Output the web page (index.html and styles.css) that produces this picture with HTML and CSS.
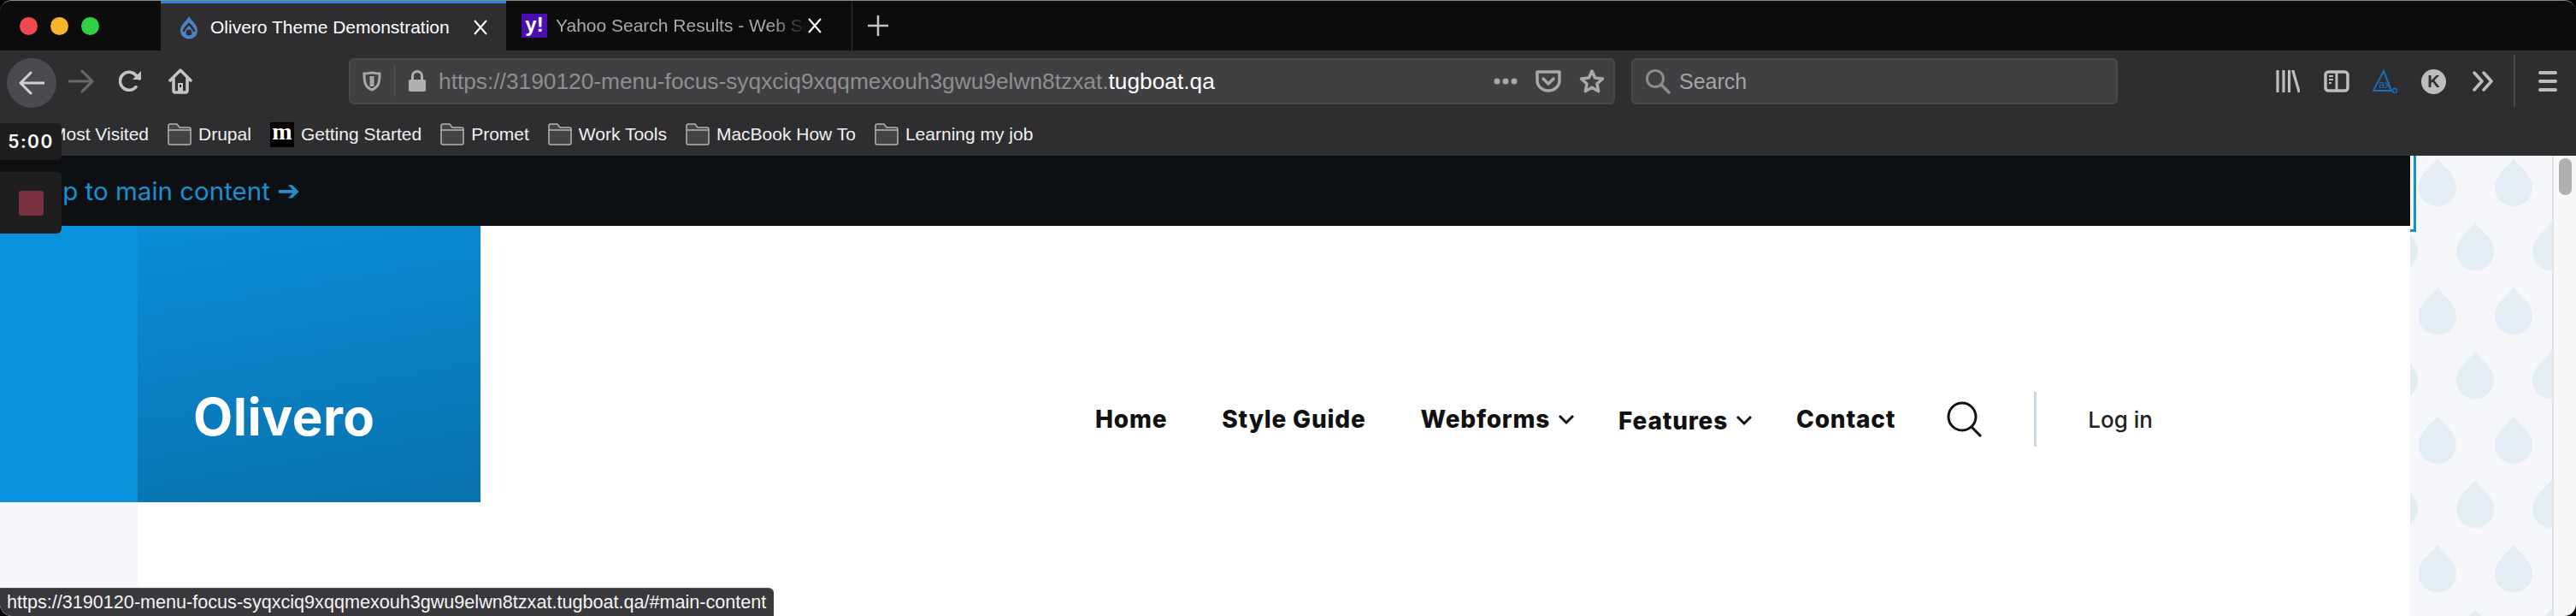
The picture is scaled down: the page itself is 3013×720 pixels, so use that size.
FILE: index.html
```html
<!doctype html>
<html lang="en">
    <head>
        <meta charset="utf-8" />
        <title>Olivero Theme Demonstration</title>
        <link rel="stylesheet" href="styles.css">
    </head>
    <body>
        <div class="window">
            <div class="tabbar">
                <div class="lights">
                    <span class="light light--red"></span>
                    <span class="light light--yellow"></span>
                    <span class="light light--green"></span>
                </div>
                <div class="tab tab--active">
                    <svg class="tab__favicon" width="24" height="28" viewBox="0 0 24 28">
                        <path d="M12 1C14 6 22 10 22 18a10 9.500 0 0 1-20 0C2 10 10 6 12 1Z" fill="#4f81c9"/>
                        <path d="M5.500 19C7 15 10 12 12 10c2 2 5 5 6.500 9" fill="none" stroke="#2e2e31" stroke-width="2.500"/>
                        <circle cx="12" cy="20" r="3.500" fill="#2e2e31"/>
                    </svg>
                    <span class="tab__title">Olivero Theme Demonstration</span>
                    <svg class="tab__close" width="16" height="18" viewBox="0 0 16 18"><path d="M1 1l14 16M15 1L1 17" stroke="#fff" stroke-width="2"/></svg>
                </div>
                <div class="tab">
                    <span class="tab__yahoo">y!</span>
                    <span class="tab__title tab__title--fade">Yahoo Search Results - Web Search</span>
                    <svg class="tab__close" width="16" height="18" viewBox="0 0 16 18"><path d="M1 1l14 16M15 1L1 17" stroke="#fff" stroke-width="2"/></svg>
                </div>
                <svg class="tabbar__new" width="26" height="26" viewBox="0 0 26 26"><path d="M13 1v24M1 13h24" stroke="#c4c4c4" stroke-width="2.500"/></svg>
            </div>

            <div class="toolbar">
                <div class="nav-btn nav-btn--back">
                    <svg width="30" height="28" viewBox="0 0 30 28"><path d="M29 14H3M14 2L2 14l12 12" fill="none" stroke="#d0d0d0" stroke-width="3" stroke-linecap="round" stroke-linejoin="round"/></svg>
                </div>
                <div class="nav-btn">
                    <svg width="30" height="28" viewBox="0 0 30 28"><path d="M1 14h26M16 2l12 12-12 12" fill="none" stroke="#6a6a6c" stroke-width="3" stroke-linecap="round" stroke-linejoin="round"/></svg>
                </div>
                <div class="nav-btn">
                    <svg width="28" height="26" viewBox="0 0 28 26"><path d="M20 19.500A10.500 10.500 0 1 1 20 6l4 4" fill="none" stroke="#c4c4c4" stroke-width="3.500" stroke-linecap="round"/><path d="M26 1v10H16" fill="#c4c4c4"/></svg>
                </div>
                <div class="nav-btn">
                    <svg width="28" height="30" viewBox="0 0 28 30"><path d="M2 14L14 2l12 12M6 11v15a2 2 0 0 0 2 2h12a2 2 0 0 0 2-2V11" fill="none" stroke="#c4c4c4" stroke-width="3.500" stroke-linejoin="round" stroke-linecap="round"/><rect x="11" y="17" width="6" height="10" fill="#c4c4c4"/><rect x="13" y="19" width="2" height="3" fill="#2e2e31"/></svg>
                </div>

                <div class="urlbar">
                    <svg class="urlbar__shield" width="22" height="24" viewBox="0 0 22 24"><path d="M2 3c6 0 6-1 9-1s3 1 9 1c0 10-1 16-9 19C3 19 2 13 2 3Z" fill="none" stroke="#a8a8a8" stroke-width="3"/><path d="M11 6v12" stroke="#a8a8a8" stroke-width="5"/></svg>
                    <span class="urlbar__divider"></span>
                    <svg class="urlbar__lock" width="22" height="26" viewBox="0 0 22 26"><path d="M5.500 12V7a5.500 5.500 0 0 1 11 0v5" fill="none" stroke="#b0b0b0" stroke-width="3"/><rect x="1" y="11" width="20" height="14" rx="2" fill="#b0b0b0"/></svg>
                    <span class="urlbar__text">https://3190120-menu-focus-syqxciq9xqqmexouh3gwu9elwn8tzxat.<b class="urlbar__host">tugboat.qa</b></span>
                    <svg class="urlbar__dots" width="28" height="8" viewBox="0 0 28 8"><circle cx="4" cy="4" r="3.500" fill="#a8a8a8"/><circle cx="14" cy="4" r="3.500" fill="#a8a8a8"/><circle cx="24" cy="4" r="3.500" fill="#a8a8a8"/></svg>
                    <svg class="urlbar__pocket" width="30" height="26" viewBox="0 0 30 26"><path d="M2 2h26v10a13 12 0 0 1-26 0Z" fill="none" stroke="#a8a8a8" stroke-width="3.500" stroke-linejoin="round"/><path d="M9 10l6 6 6-6" fill="none" stroke="#a8a8a8" stroke-width="3.500" stroke-linecap="round" stroke-linejoin="round"/></svg>
                    <svg class="urlbar__star" width="30" height="30" viewBox="0 0 30 30"><path d="M15 3l3.600 8 8.900 1-6.600 6 1.800 8.700L15 22.300 7.300 26.700 9.100 18l-6.600-6 8.900-1Z" fill="none" stroke="#a8a8a8" stroke-width="3.500" stroke-linejoin="round"/></svg>
                </div>

                <div class="searchbar">
                    <svg width="30" height="30" viewBox="0 0 30 30"><circle cx="12" cy="12" r="9.500" fill="none" stroke="#8c8c8e" stroke-width="3"/><path d="M19 19l9 9" stroke="#8c8c8e" stroke-width="3.500" stroke-linecap="round"/></svg>
                    <span class="searchbar__text">Search</span>
                </div>

                <div class="tool-btn">
                    <svg width="28" height="26" viewBox="0 0 28 26"><path d="M2 1v24M9 1v24M15.500 1v24M20 1l7 24" fill="none" stroke="#bdbdbd" stroke-width="3.200" stroke-linecap="round"/></svg>
                </div>
                <div class="tool-btn">
                    <svg width="30" height="26" viewBox="0 0 30 26"><rect x="2" y="2" width="26" height="22" rx="3.500" fill="none" stroke="#bdbdbd" stroke-width="3.500"/><path d="M15 2v22" stroke="#bdbdbd" stroke-width="3"/><path d="M6 7h5M6 11h5M6 15h3" stroke="#bdbdbd" stroke-width="2"/></svg>
                </div>
                <div class="tool-btn">
                    <svg width="30" height="28" viewBox="0 0 30 28"><path d="M13 2L1 25h21z" fill="none" stroke="#1b6db5" stroke-width="2"/><path d="M1 25h23" stroke="#1b6db5" stroke-width="2"/><circle cx="26" cy="25" r="2.500" fill="none" stroke="#1b6db5" stroke-width="1.500"/><text class="tool-btn__ax" x="7" y="22">ax</text></svg>
                </div>
                <div class="tool-btn"><span class="tool-btn__k">K</span></div>
                <div class="tool-btn">
                    <svg width="24" height="24" viewBox="0 0 24 24"><path d="M2 2l9 10-9 10M13 2l9 10-9 10" fill="none" stroke="#bdbdbd" stroke-width="3.500" stroke-linecap="round" stroke-linejoin="round"/></svg>
                </div>
                <span class="toolbar__divider"></span>
                <div class="toolbar__menu"><span></span><span></span><span></span></div>
            </div>

            <div class="bookmarks">
                <div class="bookmark">
                    <svg class="folder" width="28" height="26" viewBox="0 0 28 26"><path d="M1 23V3a2 2 0 0 1 2-2h8l3 4h11a2 2 0 0 1 2 2v16a2 2 0 0 1-2 2H3a2 2 0 0 1-2-2Z" fill="#444447" stroke="#b4b4b4" stroke-width="1.500"/><path d="M1 8h26" stroke="#b4b4b4" stroke-width="1.500"/></svg>
                    Most Visited
                </div>
                <div class="bookmark">
                    <svg class="folder" width="28" height="26" viewBox="0 0 28 26"><path d="M1 23V3a2 2 0 0 1 2-2h8l3 4h11a2 2 0 0 1 2 2v16a2 2 0 0 1-2 2H3a2 2 0 0 1-2-2Z" fill="#444447" stroke="#b4b4b4" stroke-width="1.500"/><path d="M1 8h26" stroke="#b4b4b4" stroke-width="1.500"/></svg>
                    Drupal
                </div>
                <div class="bookmark">
                    <span class="bookmark__m">m</span>
                    Getting Started
                </div>
                <div class="bookmark">
                    <svg class="folder" width="28" height="26" viewBox="0 0 28 26"><path d="M1 23V3a2 2 0 0 1 2-2h8l3 4h11a2 2 0 0 1 2 2v16a2 2 0 0 1-2 2H3a2 2 0 0 1-2-2Z" fill="#444447" stroke="#b4b4b4" stroke-width="1.500"/><path d="M1 8h26" stroke="#b4b4b4" stroke-width="1.500"/></svg>
                    Promet
                </div>
                <div class="bookmark">
                    <svg class="folder" width="28" height="26" viewBox="0 0 28 26"><path d="M1 23V3a2 2 0 0 1 2-2h8l3 4h11a2 2 0 0 1 2 2v16a2 2 0 0 1-2 2H3a2 2 0 0 1-2-2Z" fill="#444447" stroke="#b4b4b4" stroke-width="1.500"/><path d="M1 8h26" stroke="#b4b4b4" stroke-width="1.500"/></svg>
                    Work Tools
                </div>
                <div class="bookmark">
                    <svg class="folder" width="28" height="26" viewBox="0 0 28 26"><path d="M1 23V3a2 2 0 0 1 2-2h8l3 4h11a2 2 0 0 1 2 2v16a2 2 0 0 1-2 2H3a2 2 0 0 1-2-2Z" fill="#444447" stroke="#b4b4b4" stroke-width="1.500"/><path d="M1 8h26" stroke="#b4b4b4" stroke-width="1.500"/></svg>
                    MacBook How To
                </div>
                <div class="bookmark">
                    <svg class="folder" width="28" height="26" viewBox="0 0 28 26"><path d="M1 23V3a2 2 0 0 1 2-2h8l3 4h11a2 2 0 0 1 2 2v16a2 2 0 0 1-2 2H3a2 2 0 0 1-2-2Z" fill="#444447" stroke="#b4b4b4" stroke-width="1.500"/><path d="M1 8h26" stroke="#b4b4b4" stroke-width="1.500"/></svg>
                    Learning my job
                </div>
            </div>

            <div class="page">
                <div class="page__main">
                    <div class="skip-bar"><a class="skip-bar__link">Skip to main content <span class="skip-bar__arrow">➔</span></a></div>
                    <header class="site-header">
                        <div class="site-logo">
                            <div class="site-logo__stub"></div>
                            <div class="site-logo__name">Olivero</div>
                        </div>
                        <nav class="site-nav">
                            <span class="site-nav__item">Home</span>
                            <span class="site-nav__item">Style Guide</span>
                            <span class="site-nav__item site-nav__item--drop">Webforms
                                <svg width="20" height="13" viewBox="0 0 20 13"><path d="M2 2l8 8 8-8" fill="none" stroke="#111" stroke-width="3"/></svg>
                            </span>
                            <span class="site-nav__item site-nav__item--drop site-nav__item--low">Features
                                <svg width="20" height="13" viewBox="0 0 20 13"><path d="M2 2l8 8 8-8" fill="none" stroke="#111" stroke-width="3"/></svg>
                            </span>
                            <span class="site-nav__item site-nav__item--last">Contact</span>
                            <svg class="site-nav__search" width="42" height="42" viewBox="0 0 42 42"><circle cx="18" cy="18" r="16" fill="none" stroke="#111" stroke-width="3"/><path d="M29 30l11 11" stroke="#111" stroke-width="3"/></svg>
                            <span class="site-nav__divider"></span>
                            <span class="site-nav__login">Log in</span>
                        </nav>
                    </header>
                    <div class="page__below">
                        <div class="page__strip"></div>
                    </div>
                </div>
                <div class="page__side">
                    <svg class="page__drops" width="100%" height="100%">
                        <defs>
                            <path id="drop" d="M0 0C6 10 22 18 22 34C22 47 12 56 0 56C-12 56-22 47-22 34C-22 18-6 10 0 0Z" fill="#e4edf3"/>
                            <pattern id="drops" width="89" height="150.500" patternUnits="userSpaceOnUse">
                                <use href="#drop" x="32" y="3"/>
                                <use href="#drop" x="76" y="78"/>
                                <use href="#drop" x="-13" y="78"/>
                            </pattern>
                        </defs>
                        <rect width="100%" height="100%" fill="url(#drops)"/>
                    </svg>
                    <div class="page__focus"></div>
                </div>
                <div class="scrollbar"><div class="scrollbar__thumb"></div></div>
            </div>

            <div class="timer">
                <div class="timer__time">5:00</div>
                <div class="timer__stop"><span class="timer__square"></span></div>
            </div>
            <div class="status">https://3190120-menu-focus-syqxciq9xqqmexouh3gwu9elwn8tzxat.tugboat.qa/#main-content</div>
        </div>
    </body>
</html>
```

FILE: styles.css
```css
* {
    box-sizing: border-box;
}

html,
body {
    margin: 0;
    height: 720px;
    overflow: hidden;
    background: #000;
}

.window {
    position: relative;
    display: flex;
    flex-direction: column;
    height: 720px;
    overflow: hidden;
    border-top: 1px solid #8a8a8a;
    border-radius: 14px;
    background: #2e2e31;
    font-family: 'Liberation Sans', Arial, sans-serif;
}

/* tabs */
.tabbar {
    display: flex;
    align-items: stretch;
    height: 58px;
    background: #0c0c0c;
}

.lights {
    display: flex;
    align-items: center;
    gap: 15px;
    width: 188px;
    padding-left: 23px;
}

.light {
    width: 21px;
    height: 21px;
    border-radius: 50%;
}

.light--red {
    background: #f2484f;
}

.light--yellow {
    background: #f7b52c;
}

.light--green {
    background: #2fd044;
}

.tab {
    display: flex;
    align-items: center;
    width: 405px;
    padding-left: 18px;
    border-right: 1px solid #333;
    color: #aaa;
    font-size: 21px;
}

.tab--active {
    width: 404px;
    padding-left: 21px;
    border-top: 3px solid #2f86d8;
    border-right: 0;
    background: #2e2e31;
    color: #fff;
}

.tab__favicon {
    flex: none;
    margin-right: 13px;
}

.tab__title {
    flex: none;
    width: 308px;
    white-space: nowrap;
    overflow: hidden;
}

.tab__title--fade {
    width: 295px;
    -webkit-mask-image: linear-gradient(to right, #000 85%, transparent);
    mask-image: linear-gradient(to right, #000 85%, transparent);
}

.tab__close {
    flex: none;
}

.tab__yahoo {
    flex: none;
    width: 30px;
    height: 28px;
    margin-right: 10px;
    background: #4a0fb0;
    color: #fff;
    font-size: 24px;
    font-weight: bold;
    line-height: 26px;
    text-align: center;
}

.tabbar__new {
    align-self: center;
    margin-left: 17px;
}

/* toolbar */
.toolbar {
    display: flex;
    align-items: flex-start;
    height: 69px;
    padding: 9px 0 0 8px;
}

.nav-btn {
    display: flex;
    justify-content: center;
    align-items: center;
    width: 58px;
    height: 54px;
}

.nav-btn--back {
    width: 58px;
    height: 58px;
    border-radius: 50%;
    background: #4b4b4f;
}

.urlbar,
.searchbar {
    display: flex;
    align-items: center;
    height: 54px;
    border: 2px solid #4a4a4d;
    border-radius: 6px;
    background: #404043;
}

.urlbar {
    width: 1481px;
    margin-left: 168px;
    padding-left: 14px;
}

.urlbar__divider {
    width: 1px;
    height: 38px;
    margin: 0 15px;
    background: #555;
}

.urlbar__lock {
    flex: none;
}

.urlbar__text {
    margin-left: 14px;
    color: #8e8e90;
    font-size: 26.300px;
    white-space: nowrap;
}

.urlbar__host {
    color: #fff;
    font-weight: normal;
}

.urlbar__dots {
    margin-left: auto;
}

.urlbar__pocket {
    margin-left: 21px;
}

.urlbar__star {
    margin: 0 10px 0 21px;
}

.searchbar {
    width: 569px;
    margin-left: 19px;
    padding-left: 14px;
}

.searchbar__text {
    margin-left: 10px;
    color: #a4a4a6;
    font-size: 25px;
}

.tool-btn {
    display: flex;
    justify-content: center;
    align-items: center;
    width: 57px;
    height: 54px;
}

.searchbar + .tool-btn {
    margin-left: 170px;
}

.tool-btn__ax {
    fill: #1b6db5;
    font-family: 'Liberation Sans', Arial, sans-serif;
    font-size: 13px;
}

.tool-btn__k {
    width: 29px;
    height: 29px;
    border-radius: 50%;
    background: #bdbdbd;
    color: #2e2e31;
    font-size: 20px;
    font-weight: bold;
    line-height: 29px;
    text-align: center;
}

.toolbar__divider {
    width: 2px;
    height: 61px;
    margin: -4px 0 0 8px;
    background: #4a4a4d;
}

.toolbar__menu {
    display: flex;
    flex-direction: column;
    justify-content: center;
    gap: 6px;
    width: 22px;
    height: 54px;
    margin-left: 27px;
}

.toolbar__menu span {
    height: 4px;
    border-radius: 2px;
    background: #bdbdbd;
}

/* bookmarks */
.bookmarks {
    display: flex;
    align-items: center;
    gap: 22px;
    height: 54px;
    padding: 4px 0 0 24px;
    color: #f0f0f0;
    font-size: 21px;
}

.bookmark {
    display: flex;
    align-items: center;
    gap: 8px;
    white-space: nowrap;
}

.folder {
    flex: none;
}

.bookmark__m {
    width: 28px;
    height: 29px;
    background: #000;
    color: #fff;
    font-family: 'Liberation Serif', serif;
    font-size: 28px;
    font-weight: bold;
    line-height: 22px;
    text-align: center;
}

/* page */
.page {
    display: flex;
    flex: 1;
    min-height: 0;
}

.page__main {
    display: flex;
    flex-direction: column;
    width: 2819px;
    background: #fff;
}

.skip-bar {
    display: flex;
    align-items: center;
    height: 82px;
    padding-left: 31px;
    background: #0c1013;
}

.skip-bar__link {
    color: #1b8fd0;
    font-family: Inter, sans-serif;
    font-size: 29.500px;
}

.skip-bar__arrow {
    font-family: 'DejaVu Sans', sans-serif;
    font-size: 32px;
    font-weight: bold;
    line-height: 1;
}

.site-header {
    display: flex;
    height: 323px;
}

.site-logo {
    display: flex;
    width: 562px;
    background: #0a92dd;
}

.site-logo__stub {
    width: 161px;
}

.site-logo__name {
    flex: 1;
    padding: 193px 0 0 65px;
    background: linear-gradient(170deg, #0b8dd6, #0871ad);
    color: #fff;
    font-family: Inter, sans-serif;
    font-size: 60px;
    font-weight: 700;
    letter-spacing: 0.500px;
    line-height: 60px;
}

.site-nav {
    display: flex;
    align-items: center;
    align-self: flex-end;
    height: 64px;
    margin: 0 0 65px 719px;
    font-family: Inter, sans-serif;
    color: #111;
}

.site-nav__item {
    display: flex;
    align-items: center;
    gap: 9px;
    margin-right: 64px;
    font-size: 28px;
    font-weight: 800;
    letter-spacing: 0.800px;
    white-space: nowrap;
}

.site-nav__item--drop {
    margin-right: 51px;
}

.site-nav__item--low {
    padding-top: 3px;
}

.site-nav__item--last {
    margin-right: 60px;
}

.site-nav__search {
    flex: none;
    margin-right: 60px;
}

.site-nav__divider {
    width: 3px;
    height: 64px;
    margin-right: 60px;
    background: #c8d8e8;
}

.site-nav__login {
    color: #222;
    font-size: 26px;
    font-weight: 500;
}

.page__below {
    flex: 1;
}

.page__strip {
    width: 161px;
    height: 100%;
    background: #f5f7fa;
}

.page__side {
    position: relative;
    width: 168px;
    background: #f5f7fa;
    border-right: 2px solid #e0e2e4;
}

.page__drops {
    display: block;
}

.page__focus {
    position: absolute;
    top: 0;
    left: 0;
    width: 7px;
    height: 89px;
    border-right: 3px solid #148ed6;
    border-bottom: 3px solid #148ed6;
}

.scrollbar {
    flex: 1;
    padding: 3px 4px 0 6px;
    background: #f8f8f8;
}

.scrollbar__thumb {
    width: 15px;
    height: 43px;
    border-radius: 7px;
    background: #b0b0b0;
}

/* overlays */
.timer {
    position: absolute;
    top: 143px;
    left: 0;
    display: flex;
    flex-direction: column;
    gap: 14px;
    width: 72px;
    color: #fff;
}

.timer__time {
    height: 43px;
    border-radius: 0 6px 6px 0;
    background: #1f1e1f;
    font-family: Inter, sans-serif;
    font-size: 21px;
    font-weight: 600;
    letter-spacing: 1.500px;
    line-height: 43px;
    text-align: center;
}

.timer__stop {
    display: flex;
    justify-content: center;
    align-items: center;
    height: 72px;
    border-radius: 0 6px 6px 0;
    background: #1f1e1f;
}

.timer__square {
    width: 29px;
    height: 29px;
    border-radius: 3px;
    background: #79303f;
}

.status {
    position: absolute;
    left: 0;
    bottom: 0;
    width: 905px;
    height: 33px;
    padding-left: 8px;
    border-top: 1px solid #55555a;
    border-radius: 0 6px 0 0;
    background: #38383d;
    color: #f4f4f4;
    font-size: 21.600px;
    line-height: 32px;
    white-space: nowrap;
}
```
